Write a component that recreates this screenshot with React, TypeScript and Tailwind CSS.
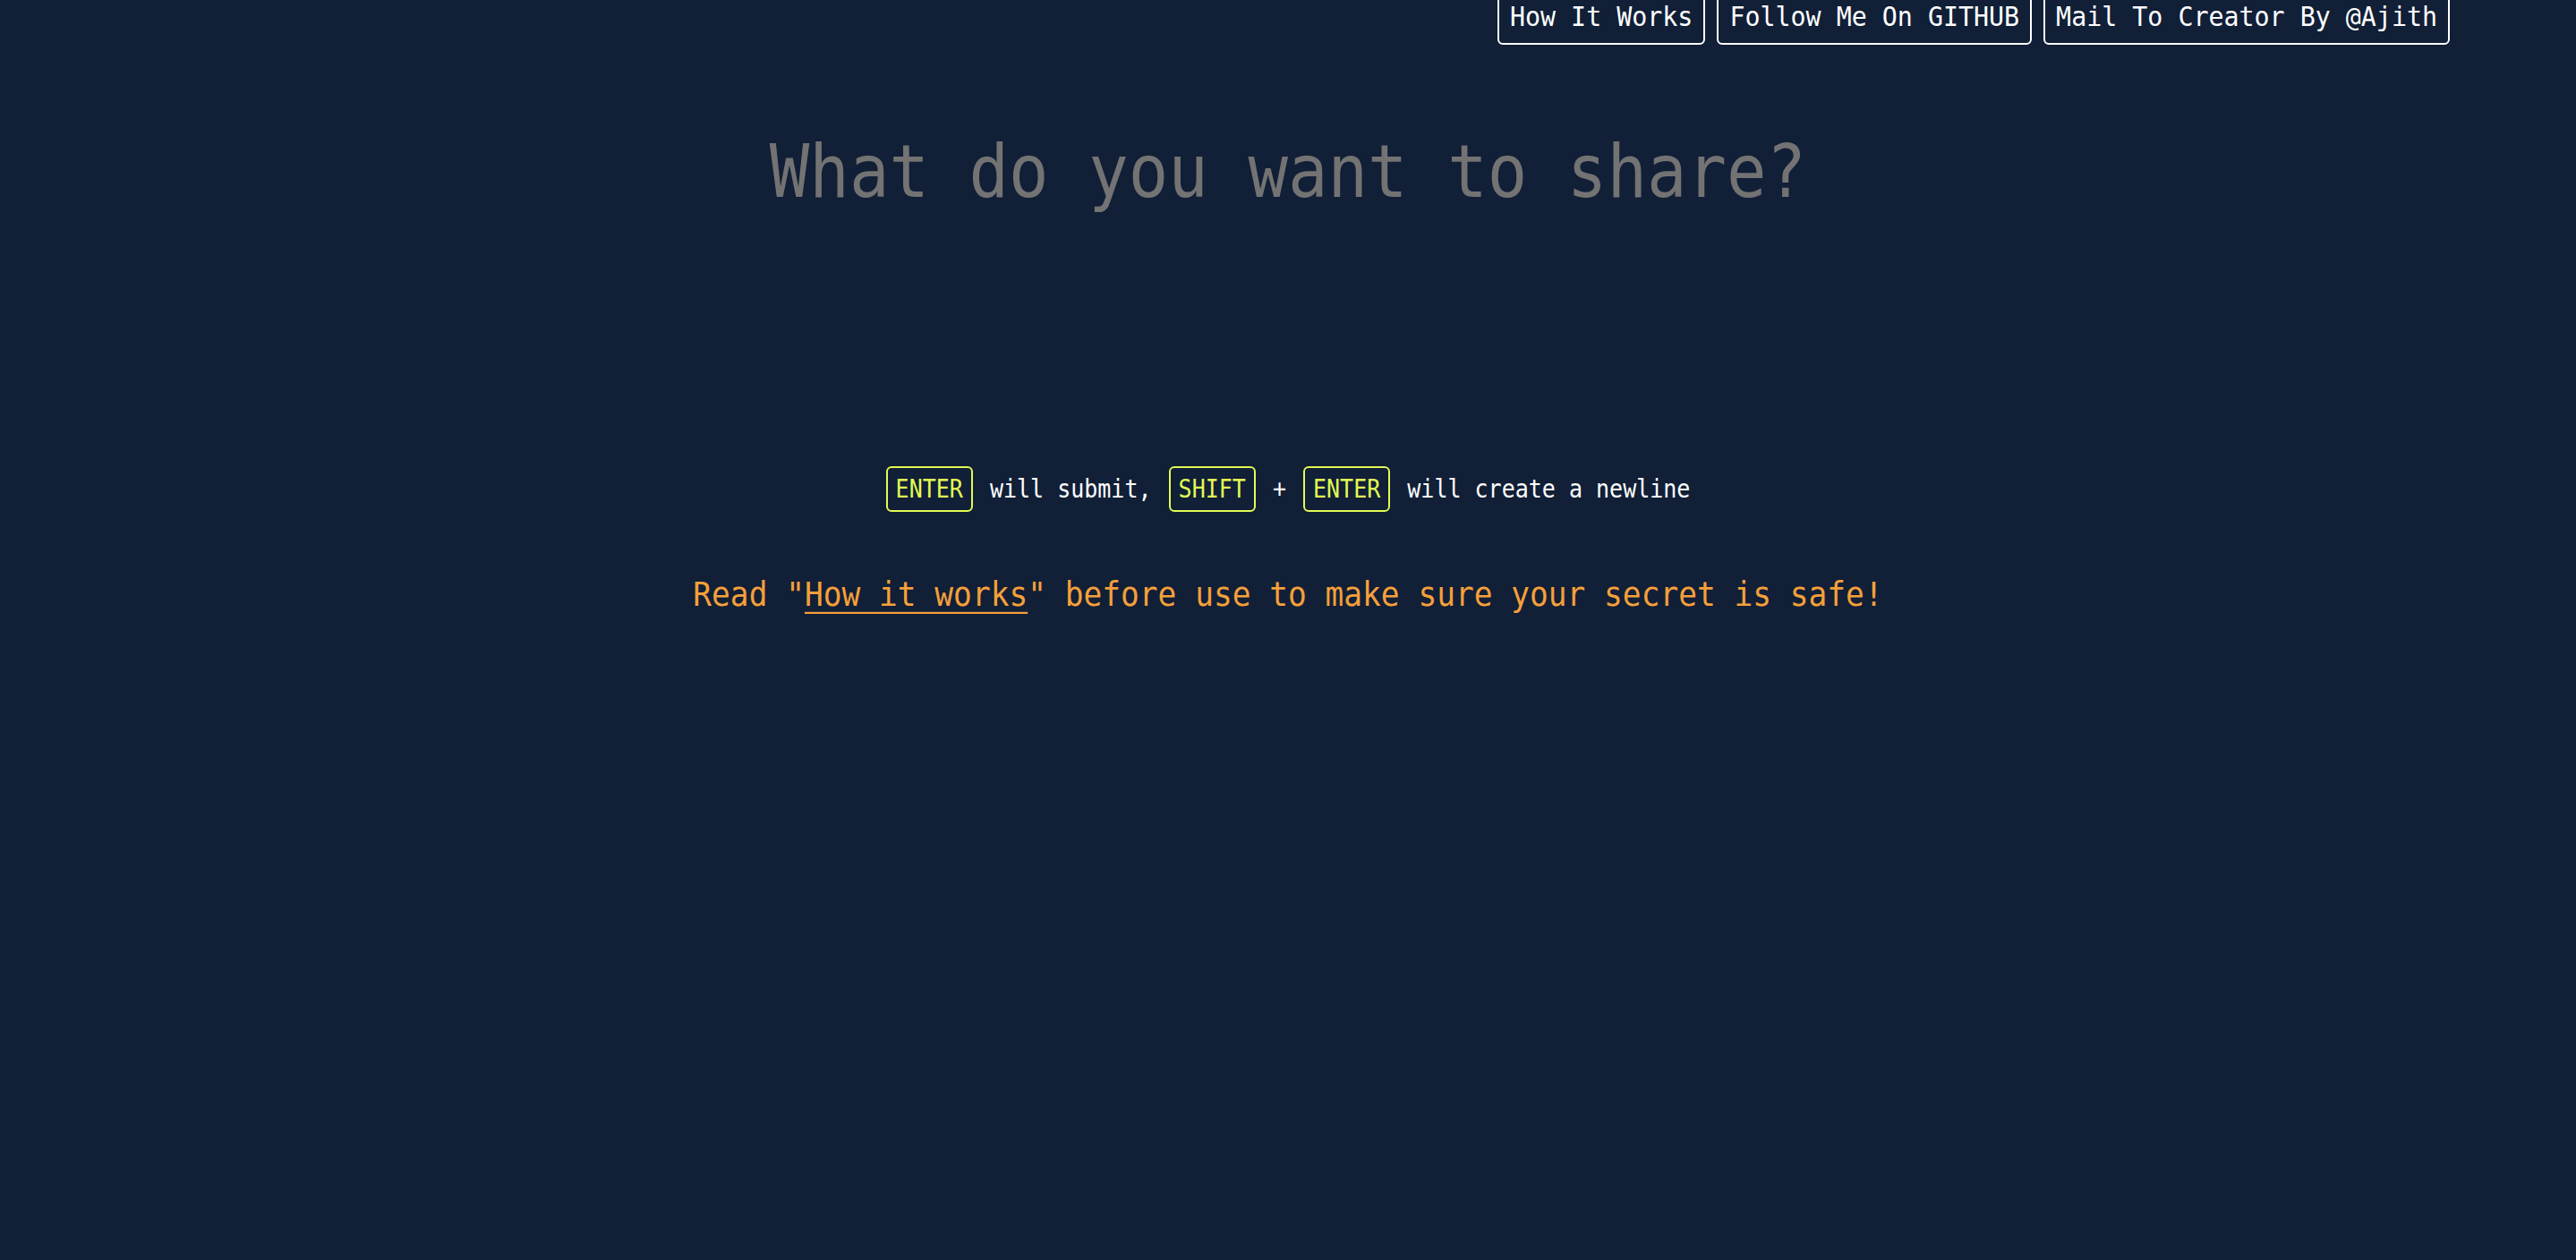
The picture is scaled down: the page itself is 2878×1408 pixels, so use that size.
import React from "react";

const mono = { fontFamily: '"DejaVu Sans Mono", "Liberation Mono", monospace' };

function NavButton({ children }: { children: React.ReactNode }) {
  return (
    <a
      href="#"
      className="block border-2 border-white rounded-md px-[12px] py-[8px] text-[28.3px] leading-[42px] text-white whitespace-pre"
    >
      <span className="inline-block scale-y-106">{children}</span>
    </a>
  );
}

function Key({ children }: { children: React.ReactNode }) {
  return (
    <span className="mx-1 inline-block border-2 border-[#e2fb54] rounded-md px-[9px] py-[5px] text-[#e2fb54] leading-[37px]">
      <span className="inline-block scale-y-110">{children}</span>
    </span>
  );
}

export default function App() {
  return (
    <div className="min-h-screen w-full bg-[#111f37] overflow-hidden" style={mono}>
      <header className="flex justify-end gap-[13px] pr-[141px] -mt-[12px]">
        <NavButton>How It Works</NavButton>
        <NavButton>Follow Me On GITHUB</NavButton>
        <NavButton>Mail To Creator By @Ajith</NavButton>
      </header>

      <div className="mt-[104px] text-center text-[74px] leading-[74px] text-[#737373] whitespace-pre">
        <span className="inline-block scale-y-110">What do you want to share?</span>
      </div>

      <div className="mt-[293px] flex items-center justify-center text-[25px] text-white whitespace-pre h-[51px] -ml-[4px]">
        <Key>ENTER</Key>
        <span className="inline-block scale-y-110"> will submit, </span>
        <Key>SHIFT</Key>
        <span className="inline-block scale-y-110"> + </span>
        <Key>ENTER</Key>
        <span className="inline-block scale-y-110"> will create a newline</span>
      </div>

      <div className="mt-[75px] text-center text-[34.5px] leading-[34.5px] text-[#f5a03a] whitespace-pre">
        <span className="inline-block scale-y-110">
          Read "<a href="#" className="underline underline-offset-[6px] decoration-2">How it works</a>" before use to make sure your secret is safe!
        </span>
      </div>
    </div>
  );
}
